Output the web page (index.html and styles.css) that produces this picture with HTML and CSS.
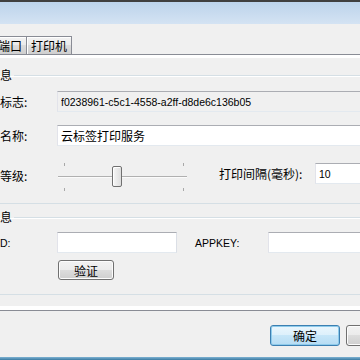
FILE: index.html
```html
<!DOCTYPE html>
<html lang="zh-CN">
<head>
  <meta charset="UTF-8">
  <title>云标签打印服务 设置</title>
  <link rel="stylesheet" href="styles.css">
</head>
<body>
  <div class="titlebar"></div>
  <div class="window">
    <div class="tabs">
      <div class="tab">打印端口</div>
      <div class="tab">打印机</div>
    </div>
    <div class="panel">
      <div class="page">
        <fieldset class="group">
          <legend>服务信息</legend>
          <div class="group-body">
            <div class="row">
              <label class="lbl">服务标志:</label>
              <input class="field lat readonly" value="f0238961-c5c1-4558-a2ff-d8de6c136b05" readonly>
            </div>
            <div class="row">
              <label class="lbl">服务名称:</label>
              <input class="field" value="云标签打印服务">
            </div>
            <div class="row row-slider">
              <label class="lbl">日志等级:</label>
              <div class="slider">
                <span class="tick tick-top tick-first"></span>
                <span class="tick tick-top tick-last"></span>
                <span class="track"></span>
                <span class="thumb"></span>
                <span class="tick tick-bottom tick-first"></span>
                <span class="tick tick-bottom tick-last"></span>
              </div>
              <label class="lbl-interval">打印间隔(毫秒):</label>
              <input class="field lat field-interval" value="10">
            </div>
          </div>
        </fieldset>

        <fieldset class="group group-auth">
          <legend>授权信息</legend>
          <div class="group-body group-body-auth">
            <div class="row">
              <label class="lbl lat">APPID:</label>
              <input class="field field-appid" value="">
              <label class="lbl-key lat">APPKEY:</label>
              <input class="field" value="">
            </div>
            <div class="actions">
              <button class="btn btn-verify">验证</button>
            </div>
          </div>
        </fieldset>
      </div>
    </div>
    <div class="footer">
      <button class="btn btn-default">确定</button>
      <button class="btn">取消</button>
    </div>
  </div>
  <div class="frame"></div>
</body>
</html>
```

FILE: styles.css
```css
html, body {
  margin: 0;
  height: 360px;
  overflow: hidden;
}
body {
  background: #f0f0f0;
  font-family: "Noto Sans CJK SC", "Liberation Sans", sans-serif;
  font-size: 12px;
  color: #000;
}
.lat {
  font-family: "Liberation Sans", "Noto Sans CJK SC", sans-serif;
  font-size: 10.5px;
}
.titlebar {
  height: 22px;
  border-top: 2px solid #3f3f3f;
  background: linear-gradient(#bcd3eb, #d4e3f3);
}
.window {
  width: 484px;
  margin-left: -60px;
  padding-top: 12px;
}
.tabs {
  display: flex;
  margin-left: 29px;
}
.tab {
  height: 17px;
  line-height: 17px;
  padding: 0 4px;
  border: 1px solid #898c95;
  border-bottom: 0;
  background: linear-gradient(#f3f3f3 0%, #ebebeb 45%, #dcdcdc 50%, #cfcfcf 100%);
  box-shadow: inset 1px 1px 0 #fff;
}
.tab + .tab {
  margin-left: -1px;
}
.panel {
  margin: 0 4px 0 2px;
  border: 1px solid #898c95;
  background: #fff;
  padding: 3px 4px 4px 3px;
}
.page {
  background: #f0f0f0;
  padding: 10px 6px 11px;
}
.group {
  margin: 0;
  padding: 0;
  min-width: 0;
  border: 1px solid #d5dfe5;
  border-radius: 3px;
  box-shadow: inset 1px 1px 0 #fff;
}
.group legend {
  margin-left: 9px;
  padding: 0 2px;
  line-height: 14px;
}
.group-auth {
  margin-top: 6px;
}
.group-body {
  padding: 9px 0 6px 23px;
}
.group-body-auth {
  padding: 8px 0 14px 23px;
}
.row {
  display: flex;
  align-items: center;
}
.row + .row {
  margin-top: 13px;
}
.row.row-slider {
  margin-top: 7px;
  height: 44px;
}
.lbl {
  width: 81px;
  flex: none;
}
.field {
  flex: 1;
  min-width: 0;
  height: 21px;
  box-sizing: border-box;
  padding: 0 3px;
  border: 1px solid;
  border-color: #abadb3 #dbdfe6 #e3e9ef #e2e3ea;
  background: #fff;
  font-family: inherit;
  font-size: 12px;
  color: #000;
  outline: none;
}
.field.lat {
  font-family: "Liberation Sans", sans-serif;
  font-size: 10.5px;
}
.field.readonly {
  background: #f0f0f0;
}
.slider {
  position: relative;
  flex: none;
  width: 133px;
  height: 44px;
}
.track {
  position: absolute;
  top: 23px;
  left: 1px;
  right: 3px;
  border-top: 1px solid #b0b0b0;
  border-bottom: 1px solid #fbfbfb;
}
.tick {
  position: absolute;
  width: 1px;
  height: 3px;
  background: #a8a8a8;
}
.tick-top { top: 10px; }
.tick-bottom { top: 35px; }
.tick-first { left: 7px; }
.tick-last { left: 126px; }
.thumb {
  position: absolute;
  top: 13px;
  left: 55px;
  width: 10px;
  height: 21px;
  box-sizing: border-box;
  border: 1px solid #707070;
  border-radius: 2px;
  background: linear-gradient(90deg, #f6f6f6, #dedede);
  box-shadow: inset 1px 1px 0 #fff;
}
.lbl-interval {
  flex: none;
  width: 96px;
  margin-left: 29px;
  margin-bottom: 4px;
}
.field-interval {
  margin-bottom: 3px;
}
.field-appid {
  flex: none;
  width: 120px;
}
.lbl-key {
  flex: none;
  width: 73px;
  margin-left: 18px;
}
.actions {
  margin-top: 7px;
  padding-left: 82px;
}
.btn {
  width: 70px;
  height: 21px;
  padding: 0;
  border: 1px solid #707070;
  border-radius: 3px;
  background: linear-gradient(#f2f2f2 0%, #ebebeb 50%, #dddddd 50%, #cfcfcf 100%);
  box-shadow: inset 0 0 0 1px #fcfcfc;
  font-family: inherit;
  font-size: 12px;
  color: #000;
}
.btn-verify {
  width: 56px;
  height: 20px;
}
.btn-default {
  border-color: #3c7fb1;
  background: linear-gradient(#eaf6fd 0%, #dcf0fb 50%, #c6e6f8 50%, #b6dcf3 100%);
  box-shadow: inset 0 0 0 1px #8ecbeb;
}
.footer {
  display: flex;
  justify-content: flex-end;
  gap: 6px;
  padding: 14px 8px 11px;
}
.frame {
  height: 3px;
  background: linear-gradient(#7fb3d3, #3b7aa2);
}
```
